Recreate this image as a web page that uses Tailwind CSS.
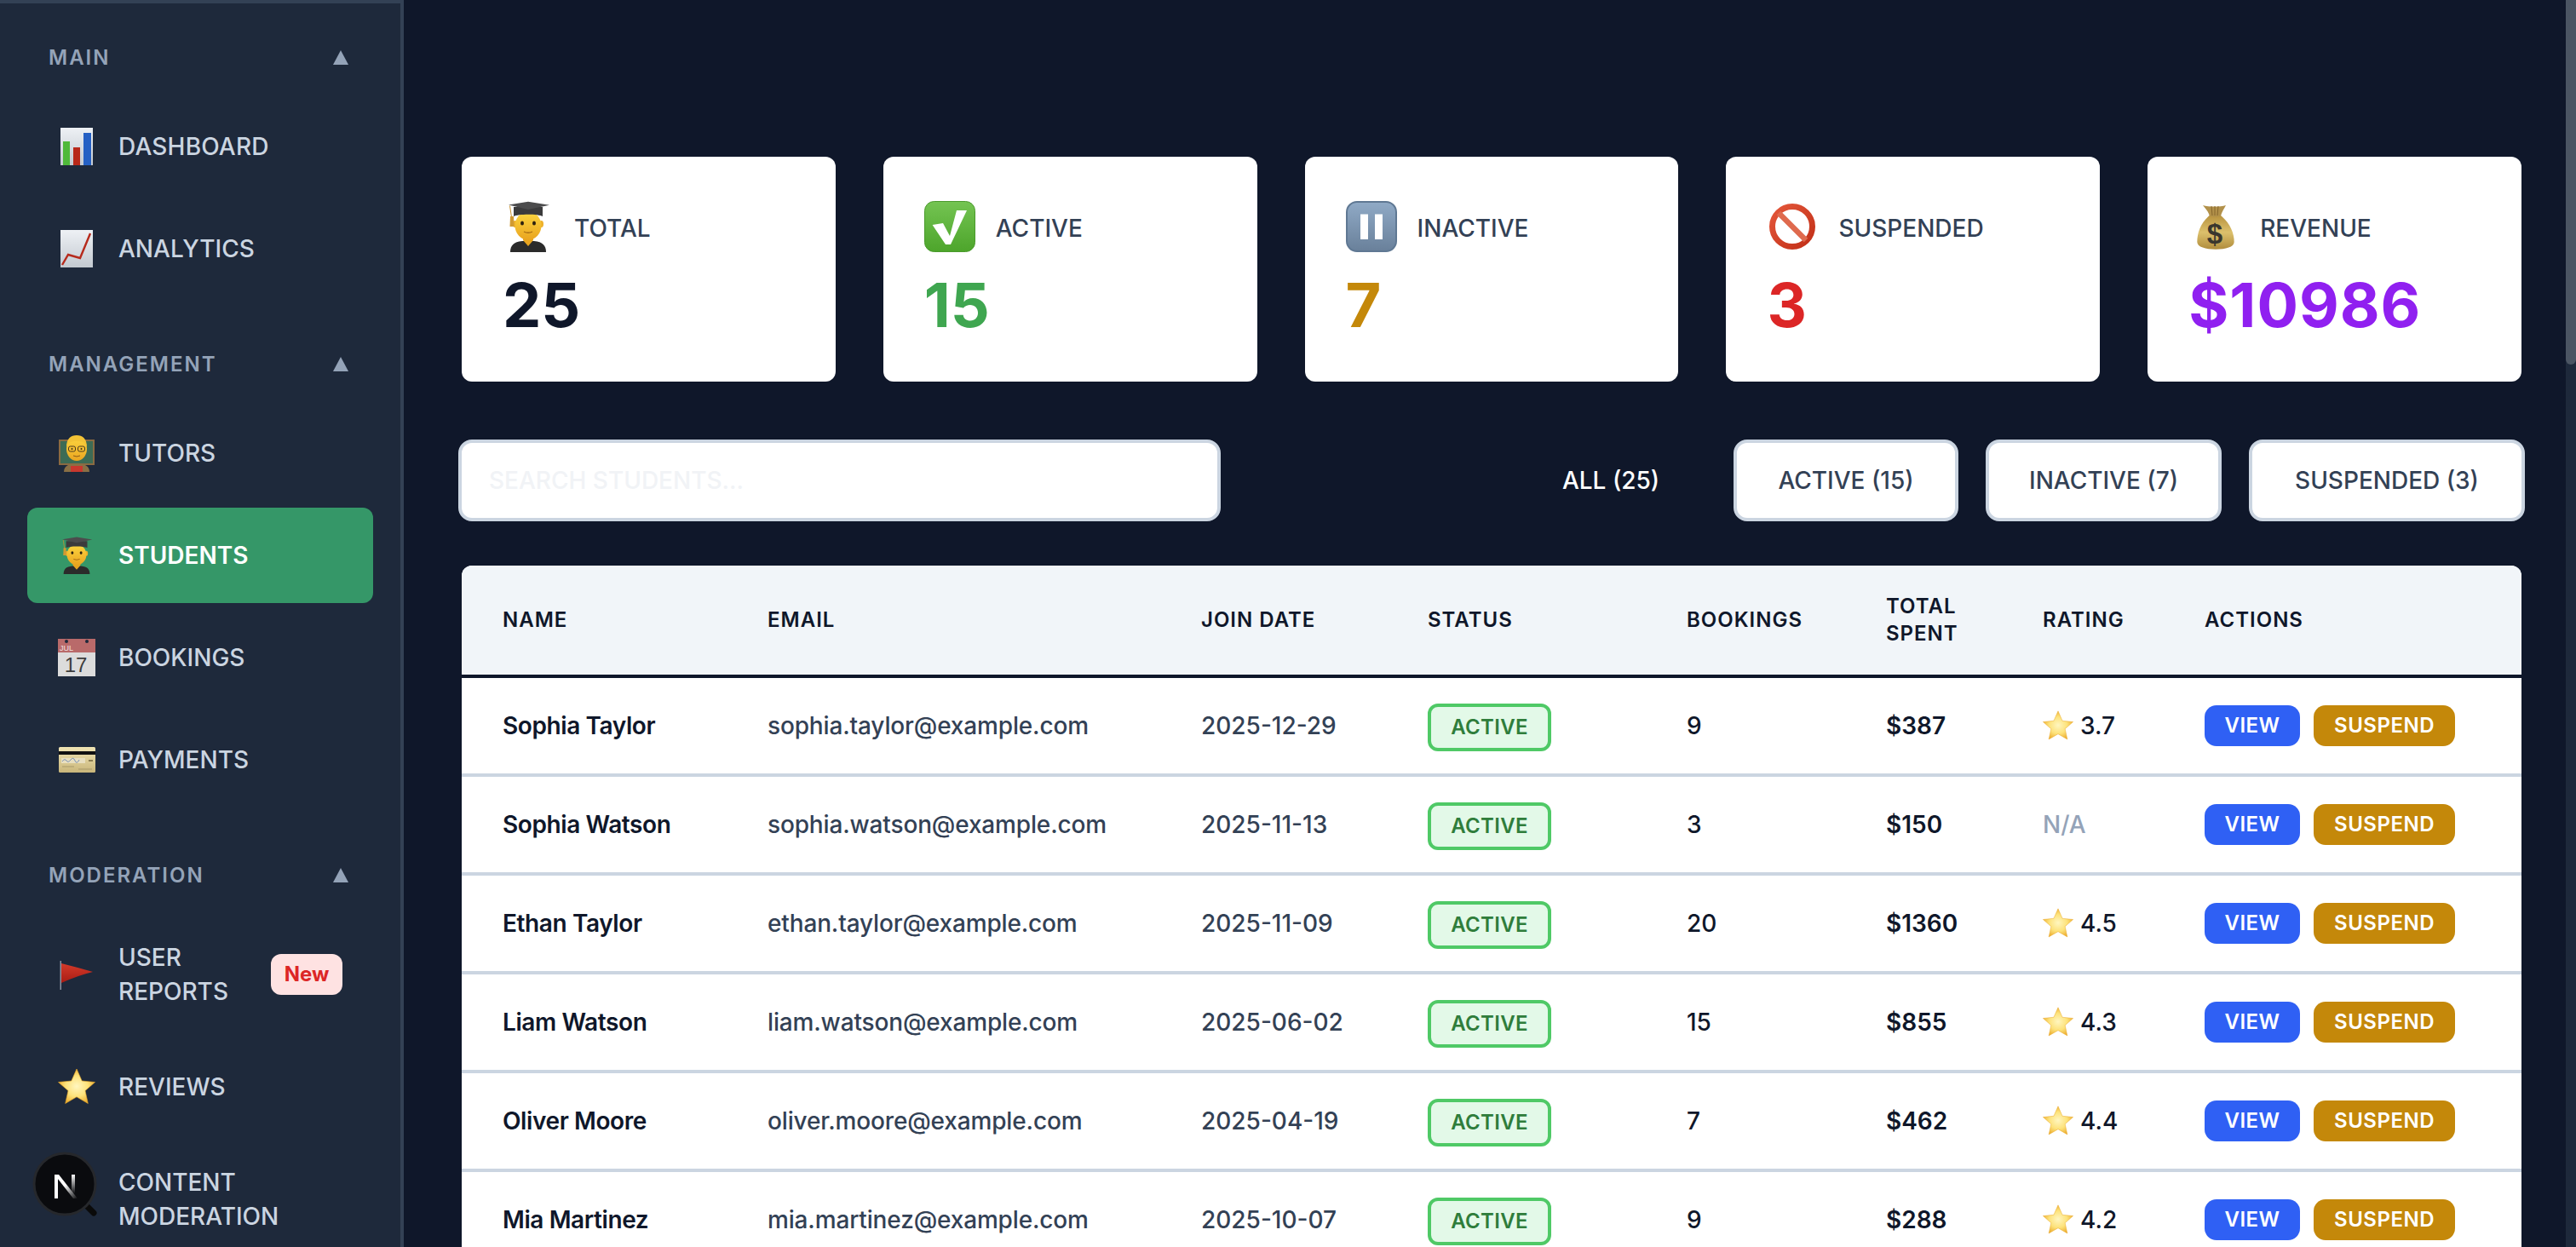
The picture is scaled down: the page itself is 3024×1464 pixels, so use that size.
<!DOCTYPE html>
<html lang="en">
<head>
    <meta charset="UTF-8">
    <meta name="viewport" content="width=device-width, initial-scale=1.0">
    <title>Students</title>
    <script src="https://cdn.jsdelivr.net/npm/@tailwindcss/browser@4"></script>
</head>
<body class="bg-[#0f172a] font-['Inter',sans-serif]">
    <!-- emoji drawn once, reused below. not display:none, the gradients stop working then -->
    <svg class="absolute w-0 h-0" xmlns="http://www.w3.org/2000/svg">
        <defs>
            <linearGradient id="paper" x1="0" y1="0" x2="0" y2="1"><stop offset="0" stop-color="#eef1f5"/><stop offset="1" stop-color="#c3c9d0"/></linearGradient>
            <linearGradient id="skin" x1="0" y1="0" x2="0" y2="1"><stop offset="0" stop-color="#fcd640"/><stop offset="1" stop-color="#eaa520"/></linearGradient>
            <linearGradient id="greenbox" x1="0" y1="0" x2="0" y2="1"><stop offset="0" stop-color="#74c452"/><stop offset="1" stop-color="#4da52b"/></linearGradient>
            <linearGradient id="bluebox" x1="0" y1="0" x2="0" y2="1"><stop offset="0" stop-color="#90aac6"/><stop offset="1" stop-color="#69809a"/></linearGradient>
            <linearGradient id="nored" x1="0" y1="0" x2="1" y2="1"><stop offset="0" stop-color="#e4573a"/><stop offset="1" stop-color="#c12f17"/></linearGradient>
            <linearGradient id="bag" x1="0" y1="0" x2="0" y2="1"><stop offset="0" stop-color="#b8933f"/><stop offset="0.5" stop-color="#dcc06c"/><stop offset="1" stop-color="#b08c3c"/></linearGradient>
            <radialGradient id="starfill" cx="0.5" cy="0.5" r="0.55"><stop offset="0" stop-color="#fff6c0"/><stop offset="0.55" stop-color="#fde27a"/><stop offset="1" stop-color="#eba92a"/></radialGradient>
            <linearGradient id="cardfill" x1="0" y1="0" x2="0" y2="1"><stop offset="0" stop-color="#f0e4b4"/><stop offset="1" stop-color="#c9b67a"/></linearGradient>
            <linearGradient id="flagfill" x1="0" y1="0" x2="0" y2="1"><stop offset="0" stop-color="#d43a2a"/><stop offset="1" stop-color="#a81c14"/></linearGradient>
            <linearGradient id="nfade" x1="0" y1="0" x2="1" y2="1"><stop offset="0.45" stop-color="#fff"/><stop offset="1" stop-color="#fff" stop-opacity="0"/></linearGradient>
            <linearGradient id="nfade2" x1="0" y1="0" x2="0" y2="1"><stop offset="0" stop-color="#fff"/><stop offset="0.8" stop-color="#fff" stop-opacity="0"/></linearGradient>
        </defs>
        <symbol id="i-bars" viewBox="0 0 44 44">
            <rect x="3" y="0" width="38" height="44" fill="url(#paper)"/>
            <rect x="6" y="16" width="8" height="28" fill="#4fb93a"/>
            <rect x="18" y="23" width="8" height="21" fill="#b8281a"/>
            <rect x="30" y="6" width="9" height="38" fill="#2560c4"/>
        </symbol>
        <symbol id="i-chart" viewBox="0 0 44 44">
            <rect x="3" y="0" width="38" height="44" fill="url(#paper)"/>
            <polyline points="5,41 12,29 26,33 38,4" fill="none" stroke="#b62a1c" stroke-width="2.4"/>
        </symbol>
        <symbol id="i-teacher" viewBox="0 0 44 44">
            <rect x="1" y="6" width="42" height="30" fill="#8a6a42"/>
            <rect x="3" y="8" width="38" height="26" fill="#3d6b55"/>
            <path d="M7 44c0-7 6-10 15-10s15 3 15 10z" fill="#8a6f45"/>
            <rect x="15" y="37" width="14" height="7" fill="#c8382e"/>
            <ellipse cx="22" cy="17" rx="12" ry="14" fill="url(#skin)"/>
            <path d="M10 15c0-10 5-14 12-14s12 4 12 14c-2-5-4-7-12-7s-10 2-12 7z" fill="#f3c336"/>
            <rect x="12.500" y="14" width="8" height="6" rx="2" fill="none" stroke="#4a3a20" stroke-width="1"/>
            <rect x="23.500" y="14" width="8" height="6" rx="2" fill="none" stroke="#4a3a20" stroke-width="1"/>
            <circle cx="16.500" cy="17" r="1" fill="#3a2a18"/><circle cx="27.500" cy="17" r="1" fill="#3a2a18"/>
            <path d="M18 25q4 2 8 0" fill="none" stroke="#8a5a18" stroke-width="1"/>
        </symbol>
        <symbol id="i-student" viewBox="0 0 60 60">
            <path d="M9 60c0-8 4-12 14-13h14c10 1 14 5 14 13z" fill="#2b2b2b"/>
            <path d="M24 42h12v4l-6 7-6-7z" fill="#e8a51f"/>
            <ellipse cx="14.500" cy="27" rx="2.500" ry="4" fill="#eeb02a"/><ellipse cx="45.500" cy="27" rx="2.500" ry="4" fill="#eeb02a"/>
            <ellipse cx="30" cy="29" rx="15.500" ry="16.500" fill="url(#skin)"/>
            <path d="M13 7h34v11c-5-3-29-3-34 0z" fill="#3b3b3c"/>
            <path d="M7 4.500 30 .7 55 4.700 30 10z" fill="#4c4c4d"/>
            <path d="M8.500 5.500 10.500 19" stroke="#c9922f" stroke-width="1" fill="none"/>
            <path d="M9 18h4l.5 12h-5z" fill="#d19a32"/>
            <ellipse cx="23" cy="26" rx="2" ry="2.500" fill="#2c2010"/><ellipse cx="37" cy="26" rx="2" ry="2.500" fill="#2c2010"/>
            <path d="M25 36q5 2.500 10 0" fill="none" stroke="#a56a14" stroke-width="1.300"/>
        </symbol>
        <symbol id="i-check" viewBox="0 0 60 60">
            <rect x=".5" y=".5" width="59" height="59" rx="11" fill="url(#greenbox)" stroke="#4a9a2c"/>
            <polygon points="9.600,28 22,26 30,41 38,11 50,11 31,51 25,51" fill="#fff"/>
        </symbol>
        <symbol id="i-pause" viewBox="0 0 60 60">
            <rect x="1" y="1" width="58" height="58" rx="12" fill="url(#bluebox)" stroke="#5f7893" stroke-width="2"/>
            <rect x="17" y="15.500" width="9" height="29.500" fill="#fff"/>
            <rect x="34" y="15.500" width="9" height="29.500" fill="#fff"/>
        </symbol>
        <symbol id="i-stop" viewBox="0 0 60 60">
            <circle cx="30" cy="30" r="23.500" fill="#fff" stroke="url(#nored)" stroke-width="7"/>
            <path d="M14 14 46 46" stroke="#df6a4e" stroke-width="6.500"/>
        </symbol>
        <symbol id="i-card" viewBox="0 0 44 44">
            <rect x="1" y="7" width="43" height="30" rx="1.500" fill="url(#cardfill)"/>
            <rect x="1" y="12" width="43" height="4" fill="#111"/>
            <rect x="4" y="20" width="28" height="6" fill="#e8dfc0"/>
            <path d="M5 24q3-4 5-1t5-1 5 1 5-1" fill="none" stroke="#5f7db0" stroke-width=".8"/>
            <rect x="36" y="22" width="5" height="2" fill="#8a7c50"/>
            <path d="M5 30h14M24 33h16" stroke="#a8996a" stroke-width="1"/>
        </symbol>
        <symbol id="i-flag" viewBox="0 0 44 44">
            <rect x="2.500" y="6" width="1.500" height="34" fill="#8a94a3"/>
            <path d="M4 9Q24 14 41 19 24 23 4 32z" fill="url(#flagfill)"/>
        </symbol>
        <symbol id="i-star" viewBox="0 0 44 44">
            <path d="M22 1l6.200 14 15.300 1.500-11.500 10 3.300 15-13.300-7.700-13.300 7.700 3.300-15L.5 16.500 15.800 15z" fill="url(#starfill)" stroke="#eba92a" stroke-width=".6" stroke-linejoin="round"/>
        </symbol>
        <symbol id="i-up" viewBox="0 0 18 17"><polygon points="9,0 18,17 0,17" fill="#94a3b8"/></symbol>
    </svg>

    <div class="relative flex w-[3024px] h-[1464px] overflow-hidden">
        <!-- sidebar -->
        <aside class="w-[474px] shrink-0 h-full bg-[#1e293b] border-t-4 border-r-4 border-[#334155] pt-[46px] flex flex-col gap-[62px] overflow-hidden">
            <section>
                <div class="flex items-center justify-between h-[34px] pl-[57px] pr-[61px] text-[#94a3b8] text-2xl font-semibold tracking-[2px]"><span class="pt-[2px]">MAIN</span><svg class="w-[18px] h-[17px]"><use href="#i-up"/></svg></div>
                <nav class="mt-8 flex flex-col gap-2">
                    <a class="mx-8 flex items-center gap-[27px] rounded-xl py-7 pl-9 pr-9 text-[28px] leading-10 font-medium tracking-[0.2px] text-[#cbd5e1]"><svg class="w-11 h-14 shrink-0"><use href="#i-bars"/></svg><span>DASHBOARD</span></a>
                    <a class="mx-8 flex items-center gap-[27px] rounded-xl py-7 pl-9 pr-9 text-[28px] leading-10 font-medium text-[#cbd5e1]"><svg class="w-11 h-14 shrink-0"><use href="#i-chart"/></svg><span>ANALYTICS</span></a>
                </nav>
            </section>
            <section>
                <div class="flex items-center justify-between h-[34px] pl-[57px] pr-[61px] text-[#94a3b8] text-2xl font-semibold tracking-[2px]"><span class="pt-[2px]">MANAGEMENT</span><svg class="w-[18px] h-[17px]"><use href="#i-up"/></svg></div>
                <nav class="mt-8 flex flex-col gap-2">
                    <a class="mx-8 flex items-center gap-[27px] rounded-xl py-7 pl-9 pr-9 text-[28px] leading-10 font-medium text-[#cbd5e1]"><svg class="w-11 h-14 shrink-0"><use href="#i-teacher"/></svg><span>TUTORS</span></a>
                    <a class="mx-8 flex items-center gap-[27px] rounded-xl py-7 pl-9 pr-9 text-[28px] leading-10 font-semibold text-white bg-[#359768]"><svg class="w-11 h-14 shrink-0"><use href="#i-student"/></svg><span>STUDENTS</span></a>
                    <a class="mx-8 flex items-center gap-[27px] rounded-xl py-7 pl-9 pr-9 text-[28px] leading-10 font-medium text-[#cbd5e1]">
                        <svg class="w-11 h-14 shrink-0" viewBox="0 0 44 44">
                            <rect width="44" height="44" fill="#dcdcdc"/>
                            <rect width="44" height="16" fill="#b96a6a"/>
                            <circle cx="10" cy="3" r="2" fill="#1e293b"/><circle cx="34" cy="3" r="2" fill="#1e293b"/>
                            <text x="2" y="14" font-family="Liberation Sans" font-size="9" fill="#f0e0e0">JUL</text>
                            <text x="21" y="39" text-anchor="middle" font-family="Liberation Sans" font-size="24" fill="#3c3c3c">17</text>
                        </svg>
                        <span>BOOKINGS</span>
                    </a>
                    <a class="mx-8 flex items-center gap-[27px] rounded-xl py-7 pl-9 pr-9 text-[28px] leading-10 font-medium text-[#cbd5e1]"><svg class="w-11 h-14 shrink-0"><use href="#i-card"/></svg><span>PAYMENTS</span></a>
                </nav>
            </section>
            <section>
                <div class="flex items-center justify-between h-[34px] pl-[57px] pr-[61px] text-[#94a3b8] text-2xl font-semibold tracking-[2px]"><span class="pt-[2px]">MODERATION</span><svg class="w-[18px] h-[17px]"><use href="#i-up"/></svg></div>
                <nav class="mt-8 flex flex-col gap-2">
                    <a class="mx-8 flex items-center gap-[27px] rounded-xl py-7 pl-9 pr-9 text-[28px] leading-10 font-medium text-[#cbd5e1]"><svg class="w-11 h-14 shrink-0"><use href="#i-flag"/></svg><span class="flex-1 min-w-0">USER REPORTS</span><span class="shrink-0 w-[84px] h-12 flex items-center justify-center rounded-xl bg-[#fee2e2] text-[#dc2626] text-2xl font-bold">New</span></a>
                    <a class="mx-8 flex items-center gap-[27px] rounded-xl py-7 pl-9 pr-9 text-[28px] leading-10 font-medium text-[#cbd5e1]"><svg class="w-11 h-14 shrink-0"><use href="#i-star"/></svg><span>REVIEWS</span></a>
                    <a class="mx-8 flex items-center gap-[27px] rounded-xl py-7 pl-9 pr-9 text-[28px] leading-10 font-medium text-[#cbd5e1]"><span class="w-11 h-14 shrink-0"></span><span>CONTENT MODERATION</span></a>
                </nav>
            </section>
        </aside>

        <!-- main -->
        <main class="flex-1 min-w-0 pl-16 pr-12 pt-[184px]">
            <div class="mx-1 grid grid-cols-5 gap-14">
                <div class="h-[264px] rounded-xl bg-white pt-[52px] px-12">
                    <div class="flex items-center gap-6 h-[60px] text-[28px] font-medium text-[#334155]"><svg class="w-[60px] h-[60px]"><use href="#i-student"/></svg><span class="mt-1">TOTAL</span></div>
                    <div class="mt-[26px] text-[72px] leading-[72px] font-bold text-[#0f172a]">25</div>
                </div>
                <div class="h-[264px] rounded-xl bg-white pt-[52px] px-12">
                    <div class="flex items-center gap-6 h-[60px] text-[28px] font-medium text-[#334155]"><svg class="w-[60px] h-[60px]"><use href="#i-check"/></svg><span class="mt-1">ACTIVE</span></div>
                    <div class="mt-[26px] text-[72px] leading-[72px] font-bold text-[#3fa650]">15</div>
                </div>
                <div class="h-[264px] rounded-xl bg-white pt-[52px] px-12">
                    <div class="flex items-center gap-6 h-[60px] text-[28px] font-medium text-[#334155]"><svg class="w-[60px] h-[60px]"><use href="#i-pause"/></svg><span class="mt-1">INACTIVE</span></div>
                    <div class="mt-[26px] text-[72px] leading-[72px] font-bold text-[#c4880a]">7</div>
                </div>
                <div class="h-[264px] rounded-xl bg-white pt-[52px] px-12">
                    <div class="flex items-center gap-6 h-[60px] text-[28px] font-medium text-[#334155]"><svg class="w-[60px] h-[60px]"><use href="#i-stop"/></svg><span class="mt-1">SUSPENDED</span></div>
                    <div class="mt-[26px] text-[72px] leading-[72px] font-bold text-[#dc2626]">3</div>
                </div>
                <div class="h-[264px] rounded-xl bg-white pt-[52px] px-12">
                    <div class="flex items-center gap-6 h-[60px] text-[28px] font-medium text-[#334155]">
                        <svg class="w-[60px] h-[60px]" viewBox="0 0 60 60">
                            <path d="M24.700 17C14 26 10.300 38 10.300 48c0 6 10 8.700 21.700 8.700S53.700 54 53.700 48C53.700 38 49 26 38 17z" fill="url(#bag)"/>
                            <path d="M17 5c7 2 20 2 27 0-2 4-5 8-6 12.500-4 1.500-9 1.500-13.300 0C24 13 20 9 17 5z" fill="#b2914a"/>
                            <path d="M27 6l1 11M31 6v11M35 6l-1 11" stroke="#86662c" stroke-width="1"/>
                            <text x="31" y="50" text-anchor="middle" font-family="Liberation Sans" font-weight="700" font-size="33" fill="#39362e">$</text>
                        </svg>
                        <span class="mt-1">REVENUE</span>
                    </div>
                    <div class="mt-[26px] text-[72px] leading-[72px] font-bold tracking-[1px] text-[#9020f0]">$10986</div>
                </div>
            </div>

            <div class="mt-[68px] flex items-center justify-between">
                <input type="text" placeholder="SEARCH STUDENTS..." class="w-[895px] h-24 rounded-2xl border-4 border-[#cbd5e1] bg-white pl-8 text-[28px] font-medium outline-none placeholder:text-[#f1f3f6]">
                <div class="flex gap-8">
                    <button class="w-[224px] h-24 rounded-2xl border-4 border-transparent text-[28px] font-medium text-white">ALL (25)</button>
                    <button class="w-[264px] h-24 rounded-2xl border-4 border-[#cbd5e1] bg-white text-[28px] font-medium text-[#334155]">ACTIVE (15)</button>
                    <button class="w-[277px] h-24 rounded-2xl border-4 border-[#cbd5e1] bg-white text-[28px] font-medium text-[#334155]">INACTIVE (7)</button>
                    <button class="w-[324px] h-24 rounded-2xl border-4 border-[#cbd5e1] bg-white text-[28px] font-medium text-[#334155]">SUSPENDED (3)</button>
                </div>
            </div>

            <div class="mx-1 mt-[52px] rounded-t-xl overflow-hidden bg-white">
                <table class="w-full table-fixed border-separate border-spacing-0">
                    <thead>
                        <tr class="bg-[#f1f5f9] text-left text-2xl leading-8 font-semibold tracking-[1px] text-[#0f172a]">
                            <th class="w-[311px] h-[132px] pl-12 border-b-4 border-[#0f172a] font-semibold">NAME</th>
                            <th class="w-[509px] pl-12 border-b-4 border-[#0f172a] font-semibold">EMAIL</th>
                            <th class="w-[266px] pl-12 border-b-4 border-[#0f172a] font-semibold">JOIN DATE</th>
                            <th class="w-[304px] pl-12 border-b-4 border-[#0f172a] font-semibold">STATUS</th>
                            <th class="w-[234px] pl-12 border-b-4 border-[#0f172a] font-semibold">BOOKINGS</th>
                            <th class="w-[184px] pl-12 border-b-4 border-[#0f172a] font-semibold">TOTAL<br>SPENT</th>
                            <th class="w-[190px] pl-12 border-b-4 border-[#0f172a] font-semibold">RATING</th>
                            <th class="pl-12 border-b-4 border-[#0f172a] font-semibold">ACTIONS</th>
                        </tr>
                    </thead>
                    <tbody id="rows"></tbody>
                </table>
            </div>
        </main>

        <!-- scrollbar -->
        <div class="w-3 shrink-0 bg-[#1e293b]"><div class="h-[428px] rounded-b-md bg-[#4b5563]"></div></div>

        <!-- next dev badge, floats over the sidebar -->
        <svg class="absolute left-[36px] top-[1350px] w-[80px] h-[80px]" viewBox="0 0 80 80">
            <path d="M62 62l12 12" stroke="#0a0a0a" stroke-width="7" stroke-linecap="round"/>
            <circle cx="40" cy="40" r="36" fill="#0a0b0e" stroke="#26282c" stroke-width="3"/>
            <rect x="28" y="29" width="4" height="28" fill="#fff"/>
            <path d="M28 29h5l22 28h-5z" fill="url(#nfade)"/>
            <rect x="48" y="29" width="4" height="28" fill="url(#nfade2)"/>
        </svg>
    </div>

    <script>
        const students = [
            ['Sophia Taylor', 'sophia.taylor@example.com', '2025-12-29', 9, '$387', '3.7'],
            ['Sophia Watson', 'sophia.watson@example.com', '2025-11-13', 3, '$150', null],
            ['Ethan Taylor', 'ethan.taylor@example.com', '2025-11-09', 20, '$1360', '4.5'],
            ['Liam Watson', 'liam.watson@example.com', '2025-06-02', 15, '$855', '4.3'],
            ['Oliver Moore', 'oliver.moore@example.com', '2025-04-19', 7, '$462', '4.4'],
            ['Mia Martinez', 'mia.martinez@example.com', '2025-10-07', 9, '$288', '4.2'],
        ];

        document.getElementById('rows').innerHTML = students.map(s => `
            <tr class="text-[28px] font-medium text-[#334155]">
                <td class="h-[116px] pl-12 border-b-4 border-[#cbd5e1] font-semibold tracking-[-0.4px] text-[#0f172a]">${s[0]}</td>
                <td class="pl-12 border-b-4 border-[#cbd5e1] tracking-[-0.15px]">${s[1]}</td>
                <td class="pl-12 border-b-4 border-[#cbd5e1]">${s[2]}</td>
                <td class="pl-12 border-b-4 border-[#cbd5e1]"><span class="flex items-center justify-center w-[145px] h-14 mt-1 rounded-xl border-4 border-[#4fc966] bg-[#e3f9e8] text-2xl font-semibold tracking-[0.3px] text-[#2f7d3b]">ACTIVE</span></td>
                <td class="pl-12 border-b-4 border-[#cbd5e1] text-[#0f172a]">${s[3]}</td>
                <td class="pl-12 border-b-4 border-[#cbd5e1] font-semibold text-[#0f172a]">${s[4]}</td>
                <td class="pl-12 border-b-4 border-[#cbd5e1]">${s[5]
                    ? `<span class="flex items-center gap-2 text-[#0f172a]"><svg class="w-9 h-9"><use href="#i-star"/></svg>${s[5]}</span>`
                    : `<span class="text-[#94a3b8]">N/A</span>`}</td>
                <td class="pl-12 border-b-4 border-[#cbd5e1]">
                    <div class="flex gap-4 text-2xl font-semibold tracking-[0.5px] text-white">
                        <button class="w-[112px] h-12 rounded-[14px] bg-[#2f60f4]">VIEW</button>
                        <button class="w-[166px] h-12 rounded-[14px] bg-[#c4880a]">SUSPEND</button>
                    </div>
                </td>
            </tr>`).join('');
    </script>
</body>
</html>
